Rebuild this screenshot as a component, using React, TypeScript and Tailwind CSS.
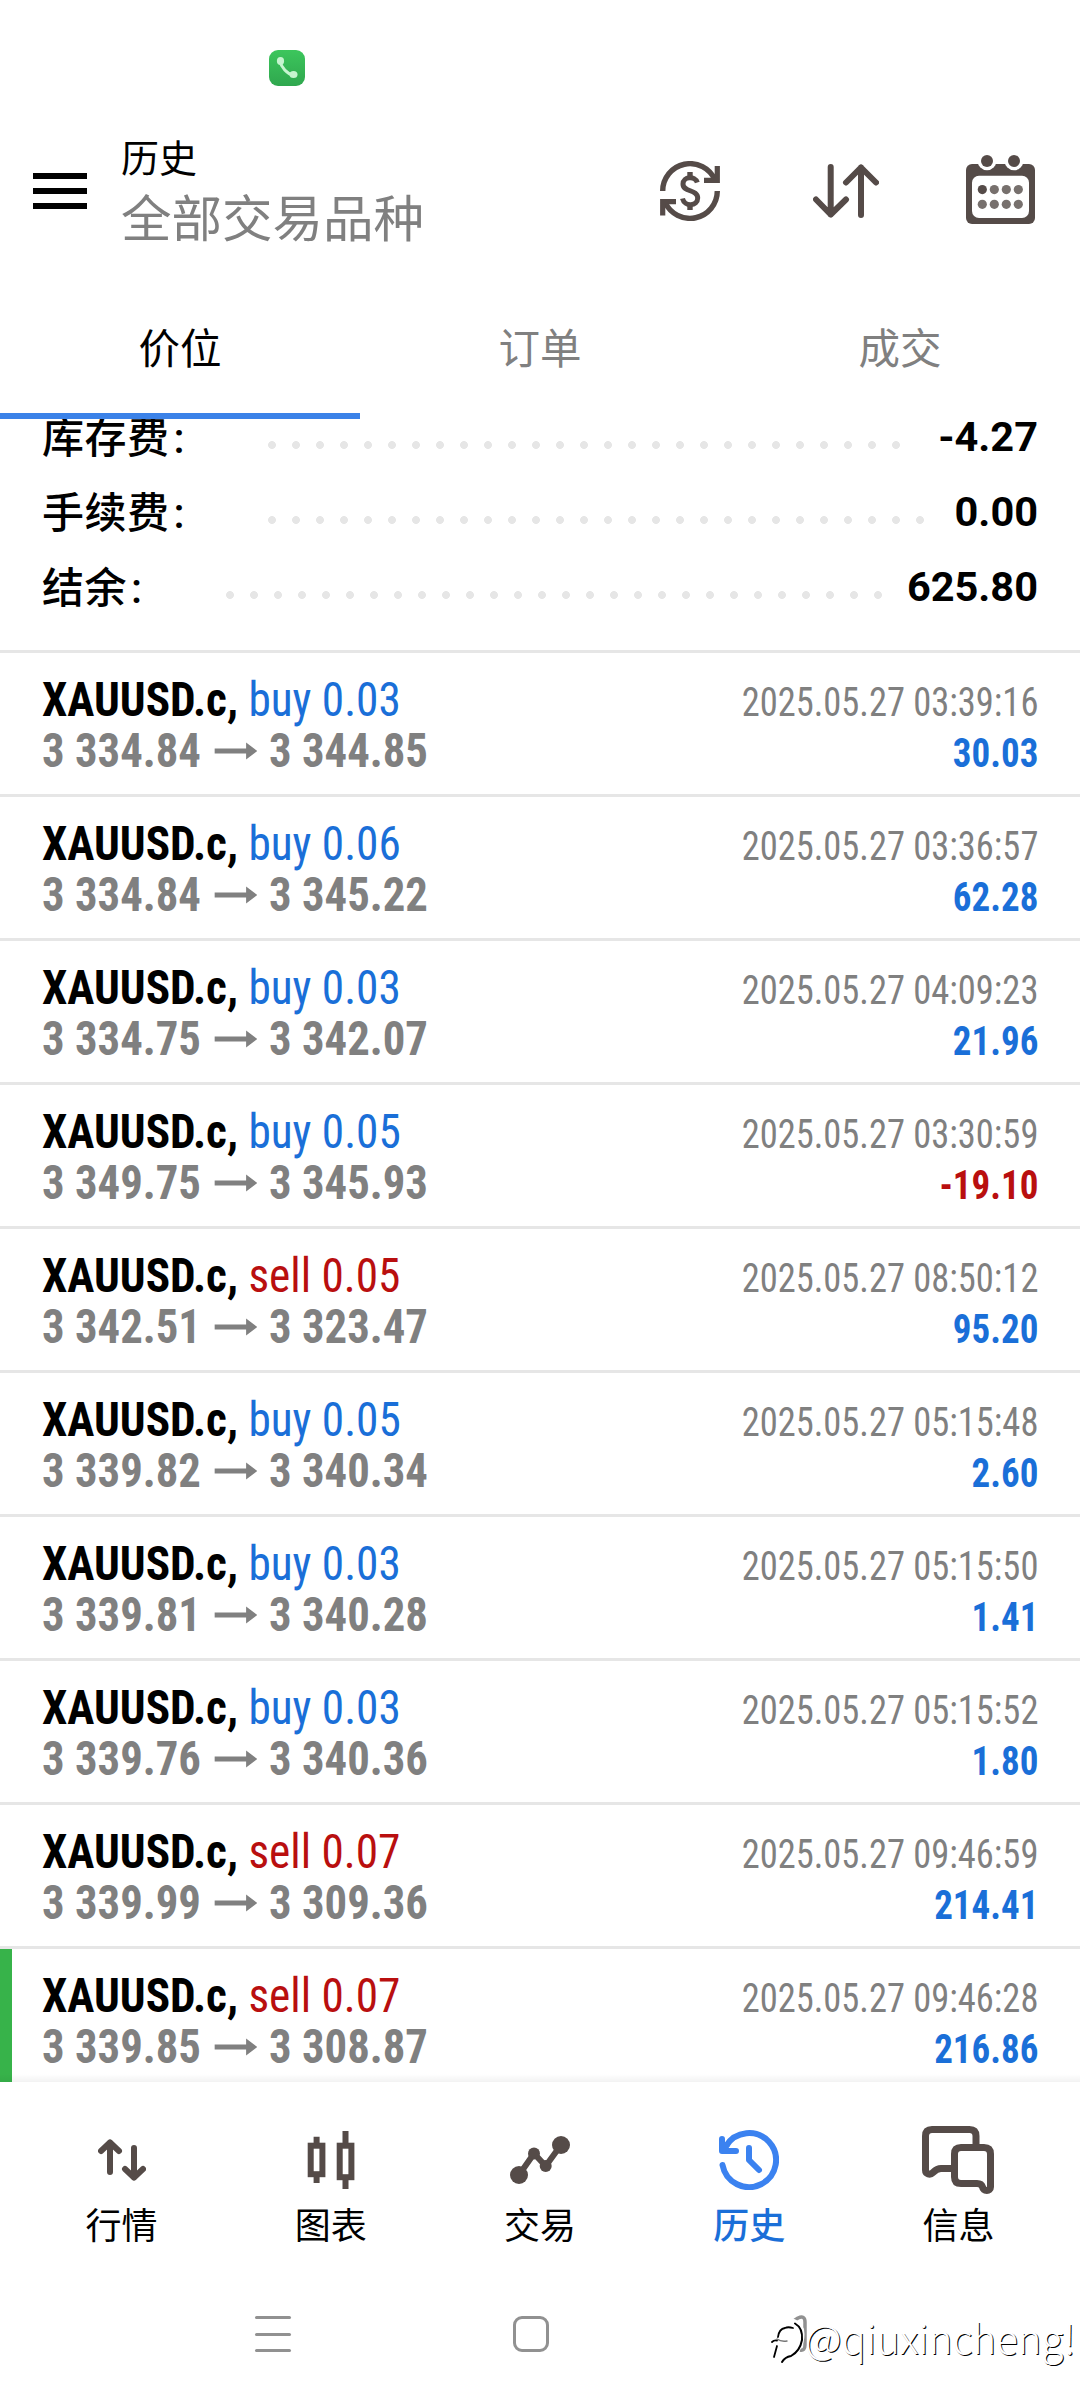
import type { ReactNode } from "react";
import clsx from "clsx";

type Deal = {
  side: "buy" | "sell";
  volume: string;
  open: string;
  close: string;
  time: string;
  profit: string;
  marked?: boolean;
};

const deals: Deal[] = [
  { side: "buy", volume: "0.03", open: "3 334.84", close: "3 344.85", time: "2025.05.27 03:39:16", profit: "30.03" },
  { side: "buy", volume: "0.06", open: "3 334.84", close: "3 345.22", time: "2025.05.27 03:36:57", profit: "62.28" },
  { side: "buy", volume: "0.03", open: "3 334.75", close: "3 342.07", time: "2025.05.27 04:09:23", profit: "21.96" },
  { side: "buy", volume: "0.05", open: "3 349.75", close: "3 345.93", time: "2025.05.27 03:30:59", profit: "-19.10" },
  { side: "sell", volume: "0.05", open: "3 342.51", close: "3 323.47", time: "2025.05.27 08:50:12", profit: "95.20" },
  { side: "buy", volume: "0.05", open: "3 339.82", close: "3 340.34", time: "2025.05.27 05:15:48", profit: "2.60" },
  { side: "buy", volume: "0.03", open: "3 339.81", close: "3 340.28", time: "2025.05.27 05:15:50", profit: "1.41" },
  { side: "buy", volume: "0.03", open: "3 339.76", close: "3 340.36", time: "2025.05.27 05:15:52", profit: "1.80" },
  { side: "sell", volume: "0.07", open: "3 339.99", close: "3 309.36", time: "2025.05.27 09:46:59", profit: "214.41" },
  { side: "sell", volume: "0.07", open: "3 339.85", close: "3 308.87", time: "2025.05.27 09:46:28", profit: "216.86", marked: true },
];

const summary = [
  { label: "库存费", value: "-4.27", dots: 27, wide: true },
  { label: "手续费", value: "0.00", dots: 28, wide: true },
  { label: "结余", value: "625.80", dots: 28, wide: false },
];

const tabs = ["价位", "订单", "成交"];

export default function App() {
  return (
    <div className="relative flex h-[2400px] w-[1080px] flex-col overflow-hidden bg-white font-['Roboto','Noto_Sans_CJK_SC',sans-serif] text-black">
      <StatusBar />
      <Header />
      <Tabs />
      <main className="relative h-[1663px] overflow-hidden">
        <Summary />
        {deals.map((deal) => (
          <DealRow key={deal.time} deal={deal} />
        ))}
        {/* soft shadow above the bottom bar */}
        <div className="absolute inset-x-0 bottom-0 h-2 bg-linear-to-b from-black/0 to-black/5" />
      </main>
      <BottomNav />
      <SystemNav />
      <Watermark />
    </div>
  );
}

function StatusBar() {
  return (
    <div className="h-[136px] pt-[50px] pl-[269px]">
      <div className="flex size-9 items-center justify-center rounded-[9px] bg-linear-to-b from-[#3cc65c] to-[#2fa74e]">
        <svg width="36" height="36" viewBox="0 0 36 36" fill="none">
          <path d="M11 11C12 17 18 24 25 25.5" stroke="#c6f4cf" strokeWidth="3" />
          <ellipse cx="11.5" cy="11" rx="3.6" ry="4" fill="#c6f4cf" />
          <ellipse cx="24.5" cy="24.5" rx="4" ry="3.6" fill="#c6f4cf" />
        </svg>
      </div>
    </div>
  );
}

function Header() {
  return (
    <header className="flex h-[110px] items-center pl-[33px]">
      <div className="flex flex-col gap-[9px]">
        <span className="h-1.5 w-[54px] bg-black" />
        <span className="h-1.5 w-[54px] bg-black" />
        <span className="h-1.5 w-[54px] bg-black" />
      </div>
      <div className="ml-[34px] flex w-[505px] flex-col pt-[7px]">
        <h1 className="text-[38px] leading-[51px]">历史</h1>
        <p className="text-[50.5px] leading-[70px] text-[#808080]">全部交易品种</p>
      </div>
      <div className="ml-[34px] flex items-center text-[#554b48]">
        <svg width="60" height="60" viewBox="0 0 60 60" fill="none" stroke="currentColor" strokeWidth="5.4">
          <path d="M2.7 30A27.3 27.3 0 0 1 55 19" />
          <path d="M57.3 30A27.3 27.3 0 0 1 5 41" />
          <path d="M57.3 5V19.3H44" strokeWidth="5.2" />
          <path d="M2.7 54.5V40.7H16" strokeWidth="5.2" />
          <path d="M37.3 21.5C35 14.5 23 15.5 23 23C23 31.5 37.7 28 37.7 37C37.7 45.5 24.5 46 22.5 37.5" strokeWidth="5" />
          <path d="M30 11V17M30 43V49" strokeWidth="5.4" />
        </svg>
        <svg className="ml-[93px]" width="66" height="54" viewBox="0 0 66 54" fill="none" stroke="currentColor" strokeWidth="6" strokeLinecap="round" strokeLinejoin="round">
          <path d="M17.7 3V50.5M3 35.5L17.7 50.5L33 35.5" />
          <path d="M48 51V3.5M33 18.5L48 3.5L63 18.5" />
        </svg>
        <svg className="mb-1 ml-[87px]" width="69" height="69" viewBox="0 0 69 69">
          <rect y="9" width="69" height="60" rx="6" fill="currentColor" />
          <rect x="6" y="20.7" width="57" height="42.3" rx="7" fill="#fff" />
          {[21, 48].map((x) => (
            <g key={x}>
              <circle cx={x} cy="6" r="9.3" fill="#fff" />
              <circle cx={x} cy="6" r="6" fill="currentColor" />
            </g>
          ))}
          {[16.3, 28.3, 40.3, 52.3].map((x, i) => (
            <g key={x}>
              <circle cx={x} cy="34.6" r="4.6" fill={i === 0 ? "#554b48" : "#77706d"} />
              <circle cx={x} cy="49.3" r="4.6" fill="#77706d" />
            </g>
          ))}
        </svg>
      </div>
    </header>
  );
}

function Tabs() {
  return (
    <div className="grid h-[173px] grid-cols-3">
      {tabs.map((tab, i) => (
        <div
          key={tab}
          className={clsx(
            "flex flex-col justify-end text-center text-[41.5px]",
            i === 0 ? "text-black" : "text-[#808080]"
          )}
        >
          <span className="mb-[33px] leading-[60px]">{tab}</span>
          <span className={clsx("h-1.5", i === 0 && "bg-[#3b82e8]")} />
        </div>
      ))}
    </div>
  );
}

function Summary() {
  return (
    <div className="-mt-[19px] pb-[25px]">
      {summary.map((row) => (
        <div key={row.label} className="flex h-[75px] items-center pr-[42px] pl-[42px] text-[42px]">
          <span className={clsx("flex gap-1 pt-0.5 font-medium tracking-[0.5px]", row.wide ? "w-[218px]" : "w-[176px]")}>
            {row.label}
            <span>:</span>
          </span>
          <span
            className="mt-[15px] h-2 bg-[radial-gradient(circle,#e6e6e6_3.6px,transparent_4.2px)] bg-[length:24px_8px]"
            style={{ width: row.dots * 24 }}
          />
          <span className="ml-auto text-[41.5px] font-bold">{row.value}</span>
        </div>
      ))}
    </div>
  );
}

function DealRow({ deal }: { deal: Deal }) {
  const loss = deal.profit.startsWith("-");

  return (
    <div className="relative flex h-36 justify-between border-t-[3px] border-[#e6e6e6] pr-[42px] pl-[42px] leading-[51px] [font-stretch:75%]">
      {deal.marked && <span className="absolute inset-y-0 left-0 w-3 bg-[#37b34a]" />}
      <div className="pt-[21px] text-[48px]">
        <div className="flex origin-left scale-x-[0.943] gap-[11px] whitespace-nowrap">
          <span className="font-bold">XAUUSD.c,</span>
          <span className={deal.side === "buy" ? "text-[#1a6fd8]" : "text-[#b90f0f]"}>
            {deal.side} {deal.volume}
          </span>
        </div>
        <div className="flex origin-left scale-x-[0.932] items-center font-bold whitespace-nowrap text-[#808080]">
          <span>{deal.open}</span>
          <svg className="mr-[13px] ml-[14px]" width="46" height="18" viewBox="0 0 46 18" fill="currentColor">
            <path d="M0 6.5H34V0.5L46 9L34 17.5V11.5H0Z" />
          </svg>
          <span>{deal.close}</span>
        </div>
      </div>
      <div className="pt-6 text-right text-[40px]">
        <div className="origin-right scale-x-[0.912] text-[#808080]">{deal.time}</div>
        <div className={clsx("origin-right scale-x-[0.925] font-bold", loss ? "text-[#b90f0f]" : "text-[#1a6fd8]")}>
          {deal.profit}
        </div>
      </div>
    </div>
  );
}

function BottomNav() {
  return (
    <nav className="flex h-[212px] px-[17px] pt-[43px] text-[#554b48]">
      <NavItem label="行情">
        <svg width="48" height="42" viewBox="0 0 48 42" fill="none" stroke="currentColor" strokeWidth="6" strokeLinecap="round" strokeLinejoin="round">
          <path d="M12 33V3.5M3 12L12 3.5L21 12" />
          <path d="M36 9V38.5M27 30L36 38.5L45 30" />
        </svg>
      </NavItem>
      <NavItem label="图表">
        <svg width="48" height="58" viewBox="0 0 48 58" fill="none" stroke="currentColor" strokeWidth="6">
          <rect x="3.7" y="14.7" width="11.7" height="28.5" />
          <path d="M9.6 5.7V12M9.6 46V52" />
          <rect x="32.7" y="14.7" width="11.7" height="31.5" />
          <path d="M38.5 0V12M38.5 49V58" />
        </svg>
      </NavItem>
      <NavItem label="交易">
        <svg width="60" height="48" viewBox="0 0 60 48" fill="currentColor">
          <path d="M9 39L24 17.5L35.7 30L51 9" fill="none" stroke="currentColor" strokeWidth="6" />
          <circle cx="9" cy="39" r="9" />
          <circle cx="24" cy="17.5" r="6" />
          <circle cx="35.7" cy="30" r="6" />
          <circle cx="51" cy="9" r="9" />
        </svg>
      </NavItem>
      <NavItem label="历史" active>
        <svg width="60" height="60" viewBox="0 0 60 60" fill="none" stroke="currentColor" strokeWidth="6" strokeLinecap="round" strokeLinejoin="round">
          <path d="M3.5 35A27 27 0 1 0 7 16" />
          <path d="M3 9V21H17M4 20L8 15" />
          <path d="M30 18V30L40 40" />
        </svg>
      </NavItem>
      <NavItem label="信息">
        <svg width="72" height="68" viewBox="0 0 72 68" fill="none" stroke="currentColor" strokeWidth="7" strokeLinejoin="round">
          <path d="M54 21V10Q54 3.5 47.5 3.5H10Q3.5 3.5 3.5 10V44C3.5 48 8 49.5 11 46.5Q15 42.5 19 42.5H31" />
          <path d="M39 21.5H62Q68.5 21.5 68.5 28V61C68.5 65.5 61.5 65.5 60.5 61Q59.5 57.5 55 57.5H39Q32.5 57.5 32.5 51V28Q32.5 21.5 39 21.5Z" />
        </svg>
      </NavItem>
    </nav>
  );
}

function NavItem({ label, active = false, children }: { label: string; active?: boolean; children: ReactNode }) {
  return (
    <div className={clsx("flex flex-1 flex-col items-center", active && "text-[#3b82f0]")}>
      <div className="flex h-[70px] items-center">{children}</div>
      <span className={clsx("mt-3 text-[36px] leading-10", active ? "font-medium text-[#1a6fd8]" : "text-black")}>
        {label}
      </span>
    </div>
  );
}

function SystemNav() {
  return (
    <div className="flex h-20 items-center gap-[222px] pl-[255px] text-[#919191]">
      <div className="flex w-9 flex-col gap-[13.5px]">
        <span className="h-[3px] rounded-full bg-current" />
        <span className="h-[3px] rounded-full bg-current" />
        <span className="h-[3px] rounded-full bg-current" />
      </div>
      <div className="size-9 rounded-[9px] border-[3px] border-current" />
      <svg width="36" height="38" viewBox="0 0 36 38" fill="none" stroke="currentColor" strokeWidth="3.5" strokeLinejoin="round">
        <path d="M21 7L27 3Q34 0 34 7V30Q34 36 29 35" />
      </svg>
    </div>
  );
}

function Watermark() {
  return (
    <div className="absolute top-[2308px] left-[768px] flex items-center font-['Noto_Sans_CJK_SC',sans-serif]">
      <svg className="mt-1" width="37" height="54" viewBox="0 0 37 54" fill="none" strokeLinecap="round">
        <path d="M12 25Q15 12 25 9Q34 12 34 22Q34 38 20 45" stroke="#fff" strokeWidth="5" />
        <path d="M10 25Q11 17 17 16Q20 14.5 25 16" stroke="#000" strokeWidth="1.8" />
        <path d="M27 11.5Q35 16 34 28Q32 39 23 44Q17 45 14 50" stroke="#000" strokeWidth="2" />
        <path d="M4 30Q6 28 9 28.5M9 34L6 45" stroke="#000" strokeWidth="1.8" />
        <path d="M9 27Q13 30 19 29" stroke="#777" strokeWidth="1.4" />
      </svg>
      <span className="text-[40.2px] leading-[54px] font-light whitespace-nowrap text-white [text-shadow:1px_1px_0_#000]">
        @qiuxincheng!
      </span>
    </div>
  );
}
